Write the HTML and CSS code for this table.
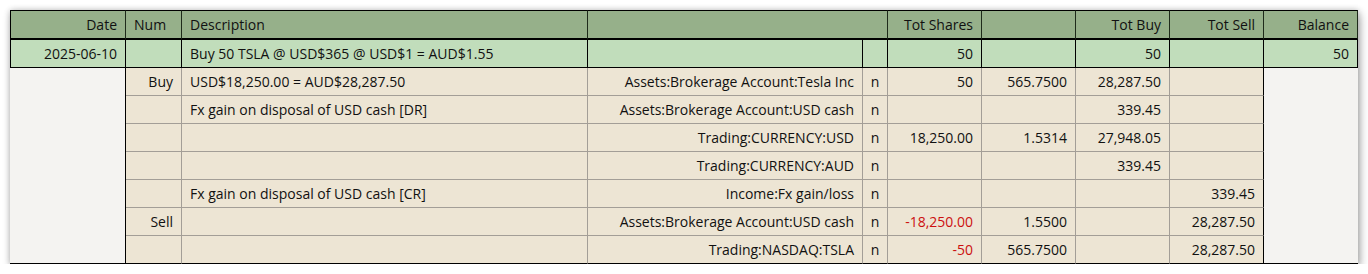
FILE: index.html
```html
<!DOCTYPE html>
<html>
<head>
<meta charset="utf-8">
<link rel="stylesheet" href="styles.css">
</head>
<body>
<div class="reg">
  <div class="c h first r">Date</div>
  <div class="c h">Num</div>
  <div class="c h">Description</div>
  <div class="c h span2"></div>
  <div class="c h r">Tot Shares</div>
  <div class="c h"></div>
  <div class="c h r">Tot Buy</div>
  <div class="c h r">Tot Sell</div>
  <div class="c h r">Balance</div>

  <div class="c t first r">2025-06-10</div>
  <div class="c t"></div>
  <div class="c t">Buy 50 TSLA @ USD$365 @ USD$1 = AUD$1.55</div>
  <div class="c t"></div>
  <div class="c t"></div>
  <div class="c t r">50</div>
  <div class="c t"></div>
  <div class="c t r">50</div>
  <div class="c t"></div>
  <div class="c t r">50</div>

  <div class="blank-date"></div>
  <div class="c s r">Buy</div>
  <div class="c s">USD$18,250.00 = AUD$28,287.50</div>
  <div class="c s r">Assets:Brokerage Account:Tesla Inc</div>
  <div class="c s m">n</div>
  <div class="c s r">50</div>
  <div class="c s r">565.7500</div>
  <div class="c s r">28,287.50</div>
  <div class="c s edge"></div>
  <div class="blank-bal"></div>

  <div class="c s"></div>
  <div class="c s">Fx gain on disposal of USD cash [DR]</div>
  <div class="c s r">Assets:Brokerage Account:USD cash</div>
  <div class="c s m">n</div>
  <div class="c s"></div>
  <div class="c s"></div>
  <div class="c s r">339.45</div>
  <div class="c s edge"></div>

  <div class="c s"></div>
  <div class="c s"></div>
  <div class="c s r">Trading:CURRENCY:USD</div>
  <div class="c s m">n</div>
  <div class="c s r">18,250.00</div>
  <div class="c s r">1.5314</div>
  <div class="c s r">27,948.05</div>
  <div class="c s edge"></div>

  <div class="c s"></div>
  <div class="c s"></div>
  <div class="c s r">Trading:CURRENCY:AUD</div>
  <div class="c s m">n</div>
  <div class="c s"></div>
  <div class="c s"></div>
  <div class="c s r">339.45</div>
  <div class="c s edge"></div>

  <div class="c s"></div>
  <div class="c s">Fx gain on disposal of USD cash [CR]</div>
  <div class="c s r">Income:Fx gain/loss</div>
  <div class="c s m">n</div>
  <div class="c s"></div>
  <div class="c s"></div>
  <div class="c s"></div>
  <div class="c s edge r">339.45</div>

  <div class="c s r">Sell</div>
  <div class="c s"></div>
  <div class="c s r">Assets:Brokerage Account:USD cash</div>
  <div class="c s m">n</div>
  <div class="c s r neg">-18,250.00</div>
  <div class="c s r">1.5500</div>
  <div class="c s"></div>
  <div class="c s edge r">28,287.50</div>

  <div class="c s last r"></div>
  <div class="c s last"></div>
  <div class="c s last r">Trading:NASDAQ:TSLA</div>
  <div class="c s last m">n</div>
  <div class="c s last r neg">-50</div>
  <div class="c s last r">565.7500</div>
  <div class="c s last"></div>
  <div class="c s last edge r">28,287.50</div>
</div>
</body>
</html>
```

FILE: styles.css
```css
html, body {
  margin: 0;
  padding: 0;
  background: #ffffff;
}

body {
  font-family: "Open Sans", "Noto Sans", sans-serif;
  font-size: 14px;
  color: #111111;
}

.reg {
  margin: 10px 0 0 10px;
  width: 1348px;
  display: grid;
  grid-template-columns: 116px 56px 406px 275px 25px 94px 94px 94px 94px 94px;
  box-shadow: 0 0 6px rgba(0, 0, 0, 0.2), 2px 4px 9px rgba(0, 0, 0, 0.3);
  background: #f4f3f1;
}

.c {
  box-sizing: border-box;
  height: 28px;
  line-height: 27px;
  padding: 0 8px;
  white-space: nowrap;
  overflow: hidden;
  border-right: 1px solid #000;
  border-bottom: 1px solid #000;
}

.r { text-align: right; }
.m { text-align: center; padding: 0; }

.h {
  height: 30px;
  line-height: 27px;
  background: #96b08a;
  border-top: 1px solid #000;
  border-bottom: 2px solid #000;
  border-right-color: #1e2a1a;
}

.span2 { grid-column: span 2; }

.first { border-left: 1px solid #000; }

.t {
  background: #c1ddbb;
}

.s {
  background: #ede5d4;
  border-right-color: #a39e97;
  border-bottom-color: #a39e97;
}

.s.edge { border-right-color: #000; }
.s.last { border-bottom-color: #000; }

.neg { color: #cc1010; }

.blank-date {
  grid-row: span 7;
  background: #f4f3f1;
  border-right: 1px solid #000;
  border-bottom: 1px solid #000;
}

.blank-bal {
  grid-row: span 7;
  background: #f4f3f1;
  border-bottom: 1px solid #000;
}
```
